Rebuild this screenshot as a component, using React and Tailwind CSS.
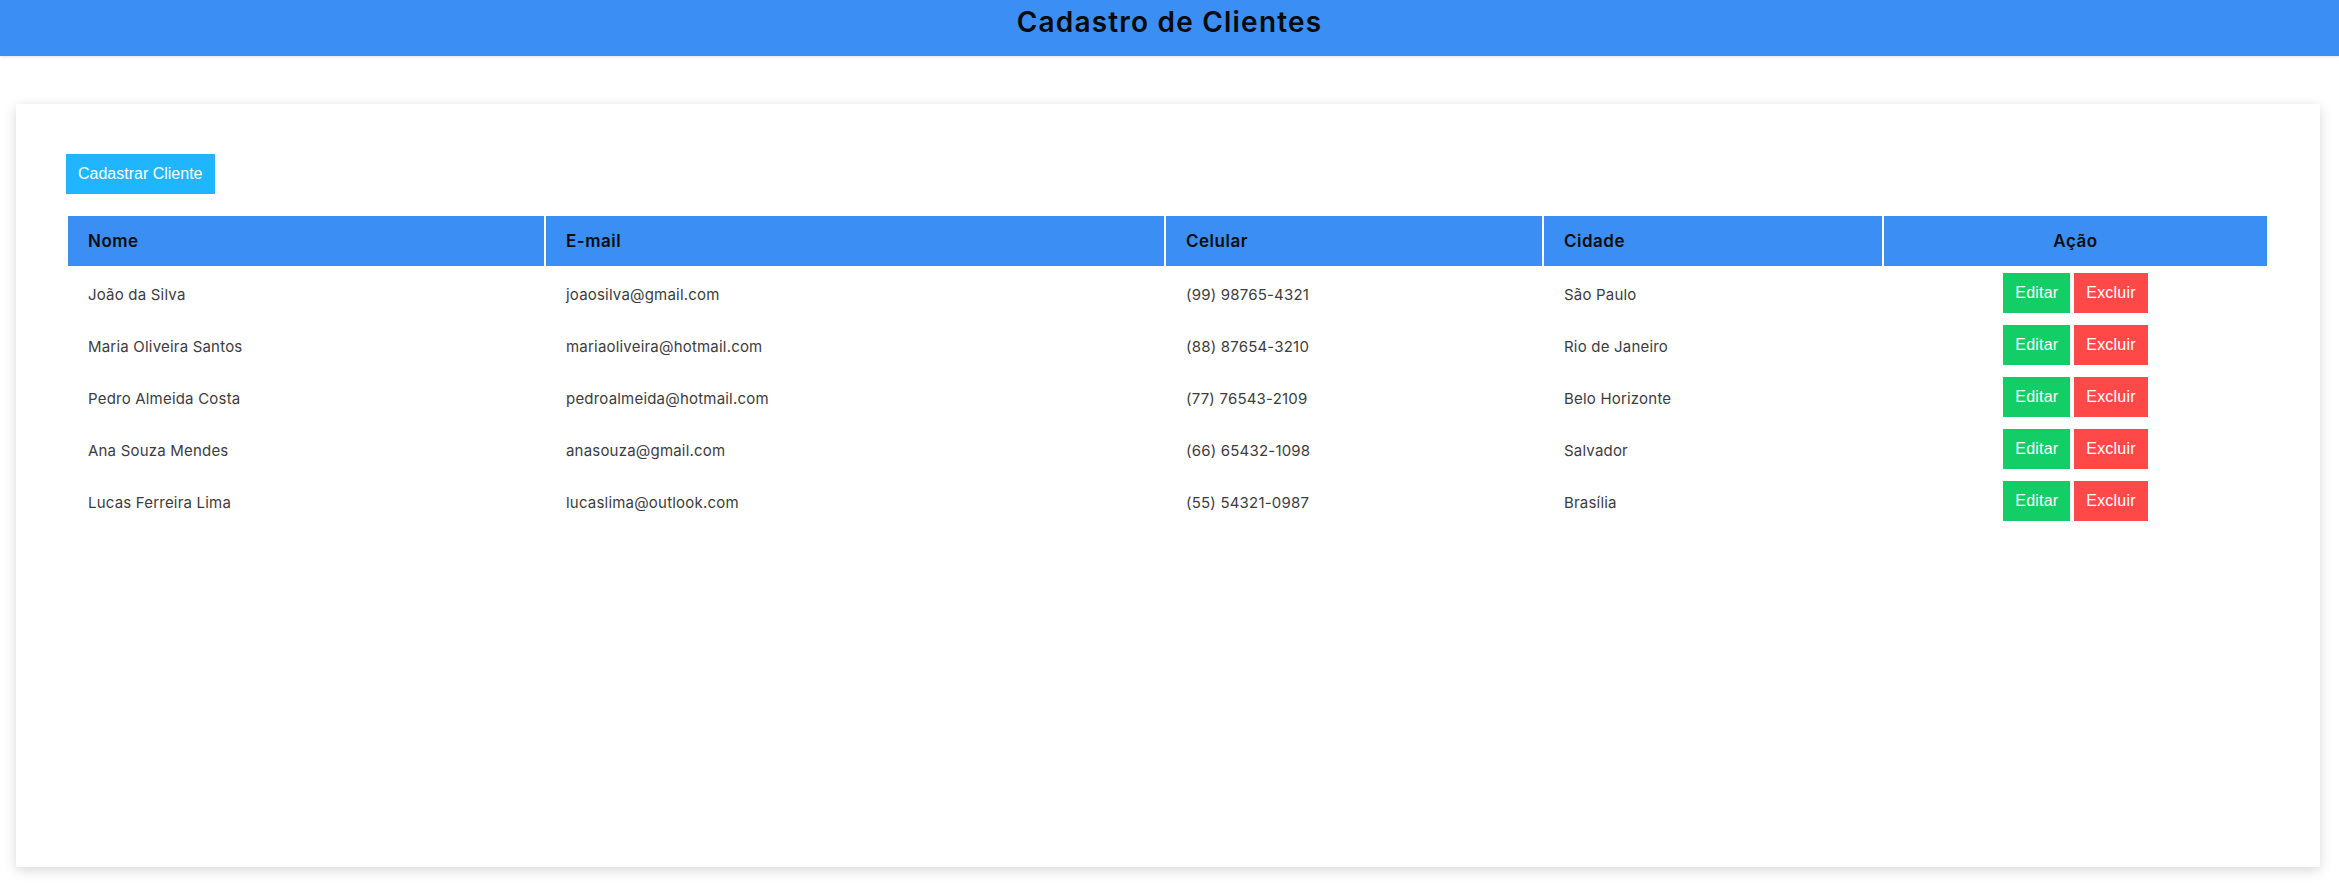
import React from "react";

const clientes = [
  { nome: "João da Silva", email: "joaosilva@gmail.com", celular: "(99) 98765-4321", cidade: "São Paulo" },
  { nome: "Maria Oliveira Santos", email: "mariaoliveira@hotmail.com", celular: "(88) 87654-3210", cidade: "Rio de Janeiro" },
  { nome: "Pedro Almeida Costa", email: "pedroalmeida@hotmail.com", celular: "(77) 76543-2109", cidade: "Belo Horizonte" },
  { nome: "Ana Souza Mendes", email: "anasouza@gmail.com", celular: "(66) 65432-1098", cidade: "Salvador" },
  { nome: "Lucas Ferreira Lima", email: "lucaslima@outlook.com", celular: "(55) 54321-0987", cidade: "Brasília" },
];

export default function App() {
  return (
    <div className="min-h-[888px] bg-white font-['Inter','Noto_Sans',sans-serif]">
      <header className="h-14 bg-[#3b8ef3] pt-[1px] shadow-[0_1px_3px_rgba(0,0,0,0.12)]">
        <h1 className="text-center text-[28px] font-semibold leading-normal tracking-[1.2px] text-[#0a0a0a]">
          Cadastro de Clientes
        </h1>
      </header>

      <main className="ml-4 mr-[19px] mt-12 h-[763px] bg-white p-[50px] shadow-[0_3px_12px_rgba(0,0,0,0.16)]">
        <button className="h-10 bg-[#1fb5ff] px-3 font-['Liberation_Sans',Arial,sans-serif] text-base text-white">
          Cadastrar Cliente
        </button>

        <table className="mt-5 w-[2203px] table-fixed border-separate border-spacing-[2px]">
          <colgroup>
            <col className="w-[476px]" />
            <col className="w-[618px]" />
            <col className="w-[376px]" />
            <col className="w-[338px]" />
            <col className="w-[383px]" />
          </colgroup>
          <thead>
            <tr className="h-[50px] bg-[#3b8ef3] text-[17px] font-semibold tracking-[0.5px] text-[#0d0d0d]">
              <th className="px-5 pt-0.5 text-left font-semibold">Nome</th>
              <th className="px-5 pt-0.5 text-left font-semibold">E-mail</th>
              <th className="px-5 pt-0.5 text-left font-semibold">Celular</th>
              <th className="px-5 pt-0.5 text-left font-semibold">Cidade</th>
              <th className="px-5 pt-0.5 text-center font-semibold">Ação</th>
            </tr>
          </thead>
          <tbody>
            {clientes.map((c) => (
              <tr key={c.email} className="h-[50px] text-[15px] tracking-[0.2px] text-[#3d3d3d]">
                <td className="px-5 pt-1">{c.nome}</td>
                <td className="px-5 pt-1">{c.email}</td>
                <td className="px-5 pt-1">{c.celular}</td>
                <td className="px-5 pt-1">{c.cidade}</td>
                <td className="px-5">
                  <div className="flex justify-center gap-1 font-['Liberation_Sans',Arial,sans-serif] text-base text-white">
                    <button className="h-10 bg-[#13ce66] px-3">Editar</button>
                    <button className="h-10 bg-[#ff4949] px-3">Excluir</button>
                  </div>
                </td>
              </tr>
            ))}
          </tbody>
        </table>
      </main>
    </div>
  );
}
